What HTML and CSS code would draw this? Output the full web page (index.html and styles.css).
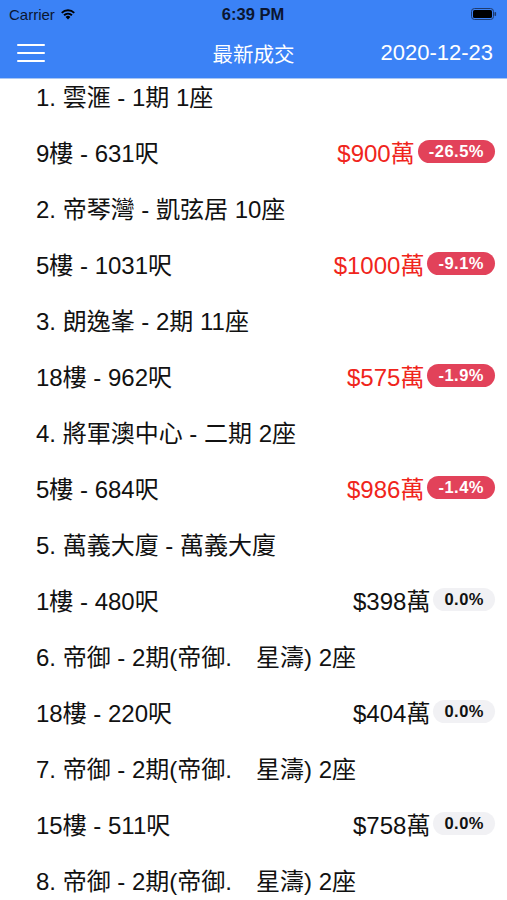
FILE: index.html
```html
<!DOCTYPE html>
<html lang="zh-Hant">
<head>
    <meta charset="UTF-8">
    <title>最新成交</title>
    <link rel="stylesheet" href="styles.css">
</head>
<body>
    <div class="top">
        <div class="status">
            <div class="status-left">
                Carrier
                <svg class="wifi" width="16" height="12" viewBox="0 0 16 12">
                    <path d="M8 11.5 L5.6 8.9 A3.4 3.4 0 0 1 10.4 8.9 Z" fill="#000"/>
                    <path d="M3.4 6.6 A6.6 6.6 0 0 1 12.6 6.6 L11.3 8 A4.8 4.8 0 0 0 4.7 8 Z" fill="#000"/>
                    <path d="M1.1 4.2 A9.8 9.8 0 0 1 14.9 4.2 L13.6 5.6 A8 8 0 0 0 2.4 5.6 Z" fill="#000"/>
                </svg>
            </div>
            <div class="status-time">6:39 PM</div>
            <div class="status-right">
                <svg width="26" height="12" viewBox="0 0 26 12">
                    <rect x="0.5" y="0.5" width="22" height="11" rx="3" fill="none" stroke="#1e3a6e" stroke-width="1"/>
                    <rect x="2" y="2" width="19" height="8" rx="1.6" fill="#000"/>
                    <rect x="23.5" y="4" width="1.6" height="4" rx="0.8" fill="#1e3a6e"/>
                </svg>
            </div>
        </div>
        <div class="navbar">
            <div class="menu">
                <span></span><span></span><span></span>
            </div>
            <div class="nav-title">最新成交</div>
            <div class="nav-date">2020-12-23</div>
        </div>
    </div>

    <div class="list" id="list"></div>

    <script>
        // 成交資料
        const deals = [
            ['雲滙 - 1期 1座', '9樓 - 631呎', '$900萬', '-26.5%', true],
            ['帝琴灣 - 凱弦居 10座', '5樓 - 1031呎', '$1000萬', '-9.1%', true],
            ['朗逸峯 - 2期 11座', '18樓 - 962呎', '$575萬', '-1.9%', true],
            ['將軍澳中心 - 二期 2座', '5樓 - 684呎', '$986萬', '-1.4%', true],
            ['萬義大廈 - 萬義大廈', '1樓 - 480呎', '$398萬', '0.0%', false],
            ['帝御 - 2期(帝御.　星濤) 2座', '18樓 - 220呎', '$404萬', '0.0%', false],
            ['帝御 - 2期(帝御.　星濤) 2座', '15樓 - 511呎', '$758萬', '0.0%', false],
            ['帝御 - 2期(帝御.　星濤) 2座', '', '', '', false]
        ];

        const list = document.getElementById('list');
        deals.forEach((d, i) => {
            const item = document.createElement('div');
            item.className = 'item';
            item.innerHTML = `
                <div class="title">${i + 1}. ${d[0]}</div>
                ${d[1] ? `
                <div class="detail">
                    <span class="floor">${d[1]}</span>
                    <span class="price ${d[4] ? 'down' : ''}">${d[2]}</span>
                    <span class="badge ${d[4] ? 'down' : ''}">${d[3]}</span>
                </div>` : ''}
            `;
            list.appendChild(item);
        });
    </script>
</body>
</html>
```

FILE: styles.css
```css
body {
    margin: 0;
    padding: 0;
    background-color: #fff;
    color: #111;
    font-family: 'Liberation Sans', 'Noto Sans CJK TC', sans-serif;
    overflow: hidden;
}

.top {
    background-color: #3b82f6;
    position: relative;
    z-index: 1;
}

.status {
    height: 28px;
    display: flex;
    align-items: center;
    justify-content: space-between;
    padding: 0 10px 0 9px;
    font-size: 15px;
    color: #0b1630;
}

.status-left {
    display: flex;
    align-items: center;
    gap: 5px;
    width: 120px;
}

.status-time {
    font-weight: bold;
    font-size: 16.5px;
}

.status-right {
    width: 120px;
    display: flex;
    justify-content: flex-end;
}

.navbar {
    height: 50px;
    display: flex;
    align-items: center;
    justify-content: space-between;
    padding: 0 14px 0 17px;
    color: #fff;
    position: relative;
    border-bottom: 1px solid #a9c6f3;
}

.menu {
    width: 28px;
    display: flex;
    flex-direction: column;
    gap: 6px;
}

.menu span {
    display: block;
    height: 2px;
    background-color: #fff;
    border-radius: 1px;
}

.nav-title {
    position: absolute;
    left: 0;
    right: 0;
    text-align: center;
    font-size: 20.5px;
    pointer-events: none;
}

.nav-date {
    font-size: 22px;
}

.list {
    padding: 0 12px 0 36px;
    margin-top: -12px;
}

.title {
    height: 56px;
    display: flex;
    align-items: center;
    font-size: 24px;
}

.detail {
    height: 56px;
    display: flex;
    align-items: center;
    font-size: 24px;
}

.floor {
    flex: 1;
}

.price {
    color: #111;
}

.price.down {
    color: #f0251c;
}

.badge {
    margin-left: 3px;
    height: 23px;
    padding: 0 11px;
    border-radius: 12px;
    display: flex;
    align-items: center;
    justify-content: center;
    font-size: 16.5px;
    font-weight: bold;
    letter-spacing: 0.5px;
    background-color: #f1f1f4;
    color: #111;
}

.badge.down {
    background-color: #e2425a;
    color: #fff;
}
```
